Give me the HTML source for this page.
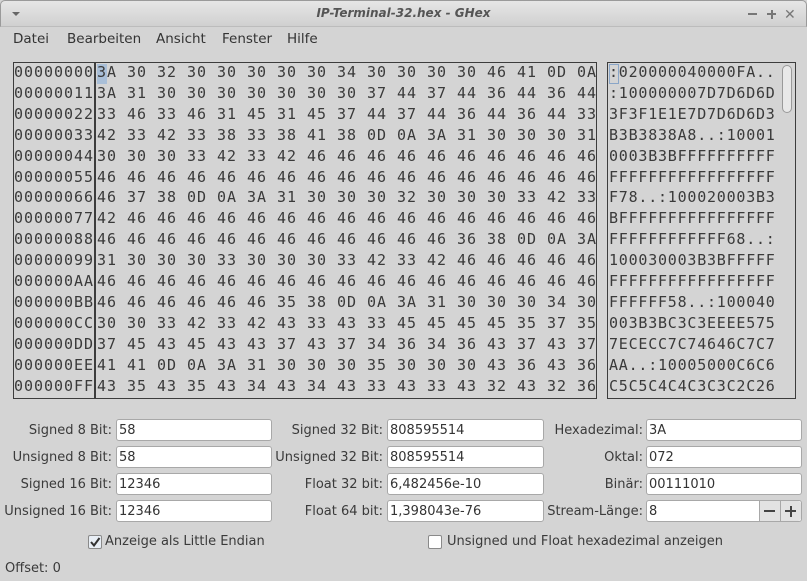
<!DOCTYPE html>
<html><head><meta charset="utf-8"><style>
*{margin:0;padding:0;box-sizing:border-box}
body{width:807px;height:581px;overflow:hidden;background:#d4d4d4;font-family:"DejaVu Sans","Liberation Sans",sans-serif;font-size:13px;color:#333;position:relative}
.title{position:absolute;left:0;top:0;width:807px;height:27px;background:linear-gradient(#e6e6e6,#d0d0d0);border:1px solid #9a9a9a;border-bottom:1px solid #bcbcbc;border-radius:5px 5px 0 0}
.title .t{position:absolute;left:0;width:100%;top:5px;text-align:center;font-style:italic;font-weight:bold;font-size:12px;color:#555}
.menu{position:absolute;top:31px;left:0;height:18px}
.menu span{position:absolute;top:0;font-size:13.5px;color:#333;white-space:nowrap}
.mono{font-family:"DejaVu Sans Mono",monospace;font-size:15px;letter-spacing:0.97px;color:#3a3a3a;white-space:pre;line-height:20.9px}
.box{position:absolute;border:1px solid #3c3c3c}
.lbl{position:absolute;text-align:right;white-space:nowrap;font-size:13px;color:#3a3a3a}
.in{position:absolute;height:22px;background:#fff;border:1px solid #a8a8a8;border-radius:3px;padding:3px 2px;font-size:13px;color:#333}
.cb{position:absolute;width:14px;height:14px;border:1px solid #8a8a8a;border-radius:2px;background:#fff}
</style></head><body>
<div class="title"><div style="position:absolute;left:11px;top:11px;width:0;height:0;border-left:4px solid transparent;border-right:4px solid transparent;border-top:4px solid #666"></div>
<div class="t">IP-Terminal-32.hex - GHex</div>
<div style="position:absolute;left:747px;top:12px;width:9px;height:2px;background:#777"></div>
<div style="position:absolute;left:766px;top:12px;width:9px;height:2px;background:#777"></div>
<div style="position:absolute;left:769.5px;top:8.5px;width:2px;height:9px;background:#777"></div>
<div style="position:absolute;left:783px;top:6px;font-size:14px;color:#777;font-weight:bold">✕</div>
</div>
<div class="menu"><span style="left:13px">Datei</span><span style="left:67px">Bearbeiten</span><span style="left:156px">Ansicht</span><span style="left:222px">Fenster</span><span style="left:287px">Hilfe</span></div>

<div class="box" style="left:13px;top:62px;width:584px;height:337px"></div>
<div style="position:absolute;left:94px;top:62px;width:2px;height:337px;background:#3c3c3c"></div>
<div style="position:absolute;left:97px;top:64px;width:10px;height:20px;background:#a9bfd8"></div>
<div class="mono" style="position:absolute;left:14px;top:62px">00000000
00000011
00000022
00000033
00000044
00000055
00000066
00000077
00000088
00000099
000000AA
000000BB
000000CC
000000DD
000000EE
000000FF</div>
<div class="mono" style="position:absolute;left:97px;top:62px">3A 30 32 30 30 30 30 30 34 30 30 30 30 46 41 0D 0A
3A 31 30 30 30 30 30 30 30 37 44 37 44 36 44 36 44
33 46 33 46 31 45 31 45 37 44 37 44 36 44 36 44 33
42 33 42 33 38 33 38 41 38 0D 0A 3A 31 30 30 30 31
30 30 30 33 42 33 42 46 46 46 46 46 46 46 46 46 46
46 46 46 46 46 46 46 46 46 46 46 46 46 46 46 46 46
46 37 38 0D 0A 3A 31 30 30 30 32 30 30 30 33 42 33
42 46 46 46 46 46 46 46 46 46 46 46 46 46 46 46 46
46 46 46 46 46 46 46 46 46 46 46 46 36 38 0D 0A 3A
31 30 30 30 33 30 30 30 33 42 33 42 46 46 46 46 46
46 46 46 46 46 46 46 46 46 46 46 46 46 46 46 46 46
46 46 46 46 46 46 35 38 0D 0A 3A 31 30 30 30 34 30
30 30 33 42 33 42 43 33 43 33 45 45 45 45 35 37 35
37 45 43 45 43 43 37 43 37 34 36 34 36 43 37 43 37
41 41 0D 0A 3A 31 30 30 30 35 30 30 30 43 36 43 36
43 35 43 35 43 34 43 34 43 33 43 33 43 32 43 32 36</div>

<div class="box" style="left:607px;top:62px;width:189px;height:337px"></div>
<div style="position:absolute;left:609px;top:64px;width:10px;height:20px;border:1px solid #8aa6c8"></div>
<div class="mono" style="position:absolute;left:609px;top:62px;letter-spacing:0.77px">:020000040000FA..
:100000007D7D6D6D
3F3F1E1E7D7D6D6D3
B3B3838A8..:10001
0003B3BFFFFFFFFFF
FFFFFFFFFFFFFFFFF
F78..:100020003B3
BFFFFFFFFFFFFFFFF
FFFFFFFFFFFF68..:
100030003B3BFFFFF
FFFFFFFFFFFFFFFFF
FFFFFF58..:100040
003B3BC3C3EEEE575
7ECECC7C74646C7C7
AA..:10005000C6C6
C5C5C4C4C3C3C2C26</div>
<div style="position:absolute;left:782px;top:65px;width:10px;height:48px;border:1px solid #999;border-radius:5px;background:#e8e8e8"></div>

<div class="lbl" style="right:695px;top:423px">Signed 8 Bit:</div><div class="in" style="left:116px;top:419px;width:156px">58</div>
<div class="lbl" style="right:695px;top:450px">Unsigned 8 Bit:</div><div class="in" style="left:116px;top:446px;width:156px">58</div>
<div class="lbl" style="right:695px;top:477px">Signed 16 Bit:</div><div class="in" style="left:116px;top:473px;width:156px">12346</div>
<div class="lbl" style="right:695px;top:504px">Unsigned 16 Bit:</div><div class="in" style="left:116px;top:500px;width:156px">12346</div>

<div class="lbl" style="right:424px;top:423px">Signed 32 Bit:</div><div class="in" style="left:387px;top:419px;width:157px">808595514</div>
<div class="lbl" style="right:424px;top:450px">Unsigned 32 Bit:</div><div class="in" style="left:387px;top:446px;width:157px">808595514</div>
<div class="lbl" style="right:424px;top:477px">Float 32 bit:</div><div class="in" style="left:387px;top:473px;width:157px">6,482456e-10</div>
<div class="lbl" style="right:424px;top:504px">Float 64 bit:</div><div class="in" style="left:387px;top:500px;width:157px">1,398043e-76</div>

<div class="lbl" style="right:164px;top:423px">Hexadezimal:</div><div class="in" style="left:646px;top:419px;width:156px">3A</div>
<div class="lbl" style="right:164px;top:450px">Oktal:</div><div class="in" style="left:646px;top:446px;width:156px">072</div>
<div class="lbl" style="right:164px;top:477px">Binär:</div><div class="in" style="left:646px;top:473px;width:156px">00111010</div>
<div class="lbl" style="right:164px;top:504px">Stream-Länge:</div><div class="in" style="left:646px;top:500px;width:156px">8</div>
<div style="position:absolute;left:759px;top:501px;width:42px;height:20px;background:#e2e2e2;border-left:1px solid #a8a8a8;border-radius:0 3px 3px 0"></div>
<div style="position:absolute;left:780px;top:501px;width:1px;height:20px;background:#a8a8a8"></div>
<div style="position:absolute;left:764px;top:510px;width:11px;height:2px;background:#444"></div>
<div style="position:absolute;left:785px;top:510px;width:11px;height:2px;background:#444"></div>
<div style="position:absolute;left:789.5px;top:505.5px;width:2px;height:11px;background:#444"></div>

<div class="cb" style="left:88px;top:535px;background:#e8eef5"><svg width="12" height="12" style="position:absolute;left:0;top:0"><path d="M2 6 L5 9.5 L10.5 2" fill="none" stroke="#333" stroke-width="2"/></svg></div>
<div class="lbl" style="left:105px;top:534px;text-align:left">Anzeige als Little Endian</div>
<div class="cb" style="left:428px;top:535px"></div>
<div class="lbl" style="left:447px;top:534px;text-align:left">Unsigned und Float hexadezimal anzeigen</div>
<div class="lbl" style="left:5px;top:561px;text-align:left">Offset: 0</div>
</body></html>
